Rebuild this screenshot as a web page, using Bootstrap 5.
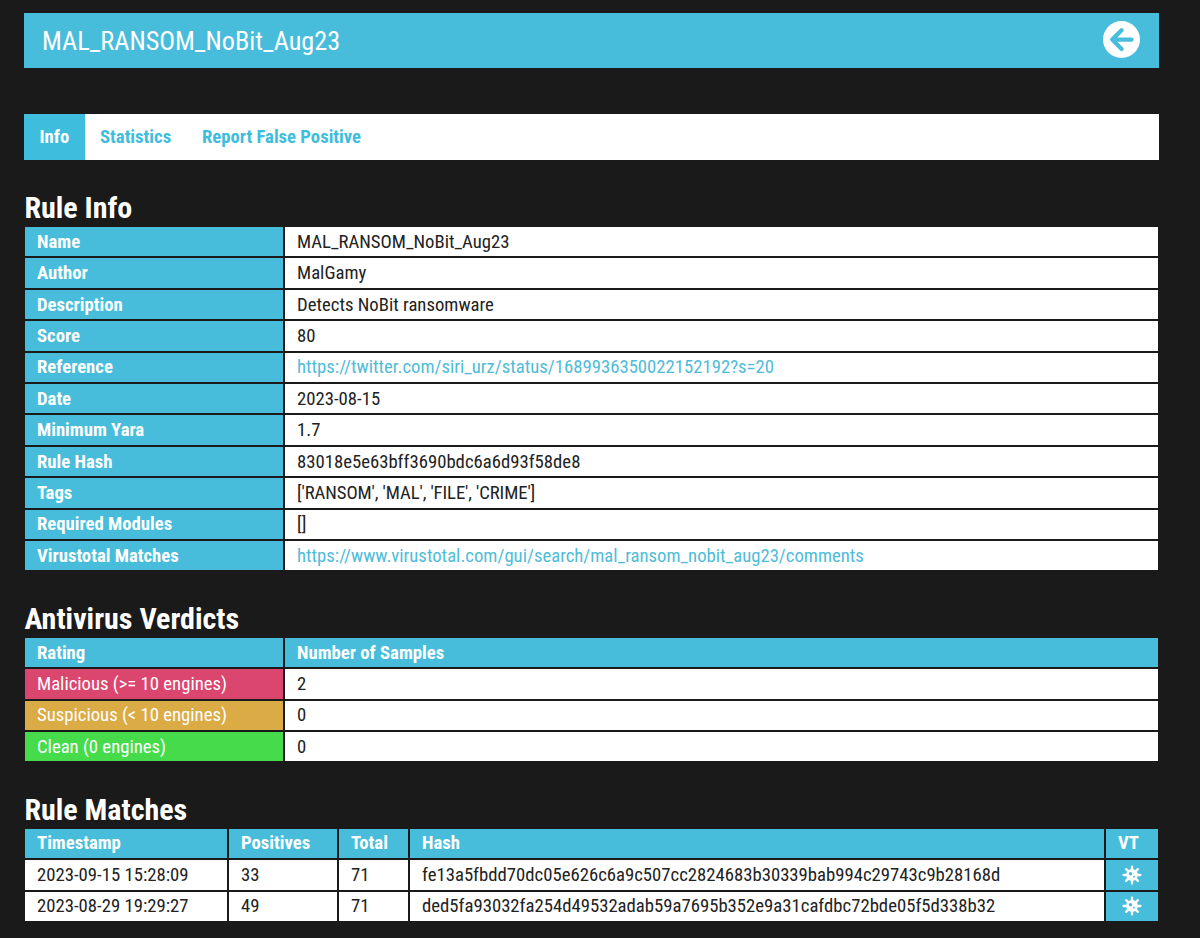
<!DOCTYPE html>
<html lang="en">
<head>
<meta charset="utf-8">
<meta name="viewport" content="width=device-width, initial-scale=1">
<title>MAL_RANSOM_NoBit_Aug23</title>
<link href="https://cdn.jsdelivr.net/npm/bootstrap@5.3.0/dist/css/bootstrap.min.css" rel="stylesheet">
<style>
  :root { --accent: #47bddb; --page: #1a1a1a; }
  body { background: var(--page); color: #222; font-family: "Roboto Condensed", Roboto, sans-serif; font-stretch: 75%; font-size: 18.72px; overflow: hidden; }
  .page-wrap { padding: 13px 41px 0 24px; }
  .title-bar { height: 55.4px; background: var(--accent); padding: 0 19px 2.4px 18px; }
  .title-bar h1 { font-size: 26.25px; line-height: 53px; font-weight: 400; color: #fff; padding-top: 3px; }
  .tab-strip { height: 46px; margin-top: 45.6px; background: #fff; }
  .tab-strip .nav-link { --bs-nav-link-color: #3fbddd; color: #3fbddd; font-weight: 700; padding: 0 15.3px 0 15.5px; line-height: 46px; border-radius: 0; }
  .tab-strip .nav-link.active { background: #3fbddd; color: #fff; }
  .section-head { color: #fff; font-weight: 700; font-size: 30px; line-height: 30px; padding: 0 0 4px .4px; }
  .grid-table { width: 1135px; margin: 0 0 0 1px; table-layout: fixed; border-collapse: separate; border-spacing: 0; line-height: 28px; }
  .grid-table th, .grid-table td { height: 31.42px; padding: 0 12px; border: solid var(--page); border-width: 0 2px 2px 0; background: #fff; background-clip: padding-box; white-space: nowrap; }
  .grid-table th, .grid-table .vt-cell { background-color: var(--accent); color: #fff; font-weight: 700; }
  .grid-table a { color: #4fbcd9; text-decoration: none; }
  .grid-table .rating { color: #fff; }
  .grid-table .tag-list { letter-spacing: -.09px; }
  .malicious { background-color: #db466f !important; }
  .suspicious { background-color: #dbab46 !important; }
  .clean { background-color: #46db4a !important; }
  .vt-cell svg { display: block; margin: 0 auto; }
</style>
</head>
<body>
<main class="page-wrap">
  <header class="title-bar d-flex align-items-center justify-content-between">
    <h1 class="m-0">MAL_RANSOM_NoBit_Aug23</h1>
    <a href="#" aria-label="Back"><svg class="d-block" width="37" height="37" viewBox="0 0 37 37"><circle cx="18.5" cy="18.5" r="18.5" fill="#fff"/><path d="M18.6 9.3 9.2 18.6l9.4 9.3M10 18.6h18.6" fill="none" stroke="#47bddb" stroke-width="4.2" stroke-linecap="round" stroke-linejoin="round"/></svg></a>
  </header>

  <nav class="tab-strip nav">
    <a class="nav-link active" href="#">Info</a>
    <a class="nav-link" href="#">Statistics</a>
    <a class="nav-link" href="#">Report False Positive</a>
  </nav>

  <section style="margin-top:33px">
    <h2 class="section-head m-0">Rule Info</h2>
    <table class="grid-table">
      <colgroup><col style="width:260px"><col></colgroup>
      <tbody>
        <tr><th>Name</th><td>MAL_RANSOM_NoBit_Aug23</td></tr>
        <tr><th>Author</th><td>MalGamy</td></tr>
        <tr><th>Description</th><td>Detects NoBit ransomware</td></tr>
        <tr><th>Score</th><td>80</td></tr>
        <tr><th>Reference</th><td><a href="#">https://twitter.com/siri_urz/status/1689936350022152192?s=20</a></td></tr>
        <tr><th>Date</th><td>2023-08-15</td></tr>
        <tr><th>Minimum Yara</th><td>1.7</td></tr>
        <tr><th>Rule Hash</th><td>83018e5e63bff3690bdc6a6d93f58de8</td></tr>
        <tr><th>Tags</th><td class="tag-list">['RANSOM', 'MAL', 'FILE', 'CRIME']</td></tr>
        <tr><th>Required Modules</th><td>[]</td></tr>
        <tr><th>Virustotal Matches</th><td><a href="#">https://www.virustotal.com/gui/search/mal_ransom_nobit_aug23/comments</a></td></tr>
      </tbody>
    </table>
  </section>

  <section style="margin-top:31.4px">
    <h2 class="section-head m-0">Antivirus Verdicts</h2>
    <table class="grid-table">
      <colgroup><col style="width:260px"><col></colgroup>
      <thead><tr><th>Rating</th><th>Number of Samples</th></tr></thead>
      <tbody>
        <tr><td class="rating malicious">Malicious (&gt;= 10 engines)</td><td>2</td></tr>
        <tr><td class="rating suspicious">Suspicious (&lt; 10 engines)</td><td>0</td></tr>
        <tr><td class="rating clean">Clean (0 engines)</td><td>0</td></tr>
      </tbody>
    </table>
  </section>

  <section style="margin-top:31.3px">
    <h2 class="section-head m-0">Rule Matches</h2>
    <table class="grid-table">
      <colgroup><col style="width:204px"><col style="width:110px"><col style="width:71px"><col><col style="width:54px"></colgroup>
      <thead><tr><th>Timestamp</th><th>Positives</th><th>Total</th><th>Hash</th><th>VT</th></tr></thead>
      <tbody>
        <tr><td>2023-09-15 15:28:09</td><td>33</td><td>71</td><td>fe13a5fbdd70dc05e626c6a9c507cc2824683b30339bab994c29743c9b28168d</td><td class="vt-cell"><svg width="20" height="20" viewBox="-10 -10 20 20"><g stroke="#fff" stroke-width="2.3" stroke-linecap="round"><path d="M0-8.4V8.4M-8.4 0H8.4M-5.9-5.9 5.9 5.9M-5.9 5.9 5.9-5.9"/></g><circle r="5.9" fill="#fff"/><circle cx="-1.5" cy="-1.3" r="1.7" fill="#47bddb"/><circle cx="2" cy="1.7" r=".9" fill="#47bddb"/></svg></td></tr>
        <tr><td>2023-08-29 19:29:27</td><td>49</td><td>71</td><td>ded5fa93032fa254d49532adab59a7695b352e9a31cafdbc72bde05f5d338b32</td><td class="vt-cell"><svg width="20" height="20" viewBox="-10 -10 20 20"><g stroke="#fff" stroke-width="2.3" stroke-linecap="round"><path d="M0-8.4V8.4M-8.4 0H8.4M-5.9-5.9 5.9 5.9M-5.9 5.9 5.9-5.9"/></g><circle r="5.9" fill="#fff"/><circle cx="-1.5" cy="-1.3" r="1.7" fill="#47bddb"/><circle cx="2" cy="1.7" r=".9" fill="#47bddb"/></svg></td></tr>
      </tbody>
    </table>
  </section>
</main>
<script src="https://cdn.jsdelivr.net/npm/bootstrap@5.3.0/dist/js/bootstrap.bundle.min.js"></script>
</body>
</html>
